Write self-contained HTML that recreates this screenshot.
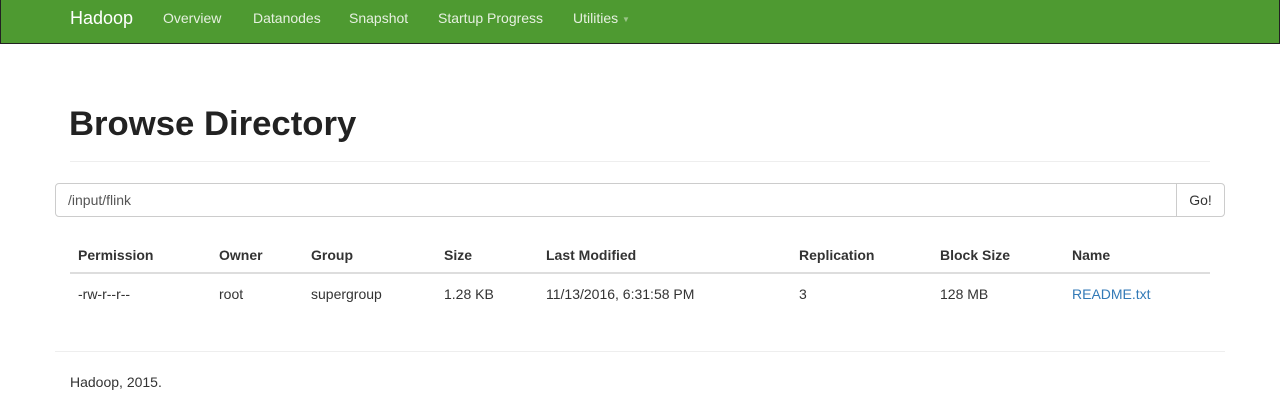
<!DOCTYPE html>
<html><head><style>
*{box-sizing:border-box;margin:0;padding:0}
body{width:1280px;height:413px;background:#fff;font-family:"Liberation Sans",Arial,sans-serif;font-size:14px;color:#333;position:relative;overflow:hidden}
.nav{position:absolute;left:0;top:0;width:1280px;height:44px;background:#4e9a31;border:1px solid #222;border-top:none}
.nav span{position:absolute;top:10px;color:#e6f0e0;font-size:14px}
.abs{position:absolute;white-space:nowrap}
</style></head><body>
<div class="nav">
<span style="left:69px;top:8px;font-size:18px;color:#fff">Hadoop</span>
<span style="left:162px">Overview</span>
<span style="left:252px">Datanodes</span>
<span style="left:348px">Snapshot</span>
<span style="left:437px">Startup Progress</span>
<span style="left:572px">Utilities <span style="position:static;font-size:8px;color:#9bc58a;vertical-align:middle">▼</span></span>
</div>
<div class="abs" style="left:69px;top:105px;font-size:34.7px;font-weight:bold;color:#222">Browse Directory</div>
<div class="abs" style="left:70px;top:161px;width:1140px;height:1px;background:#eee"></div>
<div class="abs" style="left:55px;top:183px;width:1122px;height:34px;border:1px solid #ccc;border-radius:4px 0 0 4px;padding:8px 12px;color:#555">/input/flink</div>
<div class="abs" style="left:1176px;top:183px;width:49px;height:34px;border:1px solid #ccc;border-radius:0 4px 4px 0;text-align:center;padding-top:8px;color:#333">Go!</div>
<div class="abs" style="left:78px;top:247px;font-weight:bold">Permission</div>
<div class="abs" style="left:219px;top:247px;font-weight:bold">Owner</div>
<div class="abs" style="left:311px;top:247px;font-weight:bold">Group</div>
<div class="abs" style="left:444px;top:247px;font-weight:bold">Size</div>
<div class="abs" style="left:546px;top:247px;font-weight:bold">Last Modified</div>
<div class="abs" style="left:799px;top:247px;font-weight:bold">Replication</div>
<div class="abs" style="left:940px;top:247px;font-weight:bold">Block Size</div>
<div class="abs" style="left:1072px;top:247px;font-weight:bold">Name</div>
<div class="abs" style="left:70px;top:272px;width:1140px;height:2px;background:#ddd"></div>
<div class="abs" style="left:78px;top:286px">-rw-r--r--</div>
<div class="abs" style="left:219px;top:286px">root</div>
<div class="abs" style="left:311px;top:286px">supergroup</div>
<div class="abs" style="left:444px;top:286px">1.28 KB</div>
<div class="abs" style="left:546px;top:286px">11/13/2016, 6:31:58 PM</div>
<div class="abs" style="left:799px;top:286px">3</div>
<div class="abs" style="left:940px;top:286px">128 MB</div>
<div class="abs" style="left:1072px;top:286px;color:#337ab7">README.txt</div>
<div class="abs" style="left:55px;top:351px;width:1170px;height:1px;background:#eee"></div>
<div class="abs" style="left:70px;top:374px">Hadoop, 2015.</div>
</body></html>
